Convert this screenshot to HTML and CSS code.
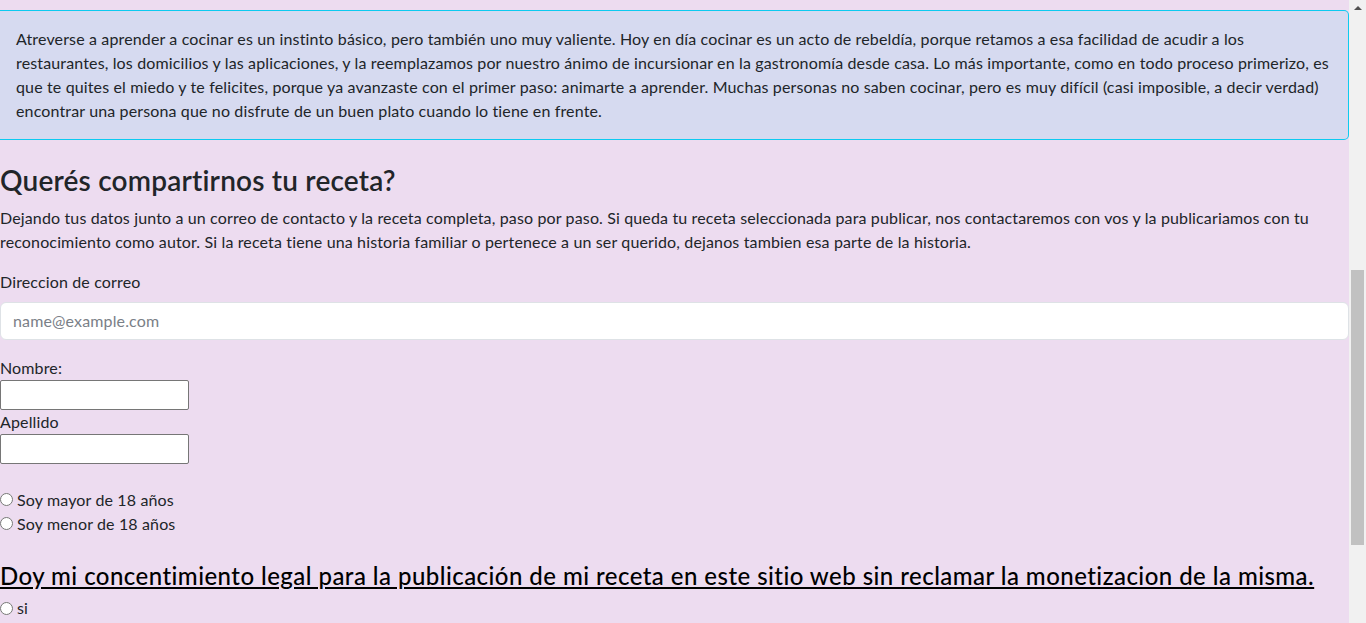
FILE: index.html
```html
<!DOCTYPE html>
<html lang="es">
<head>
<meta charset="utf-8">
<title>Recetas</title>
<link rel="stylesheet" href="styles.css">
</head>
<body>
<div class="page">
  <main class="content">
    <div class="intro-box">
      <p>Atreverse a aprender a cocinar es un instinto básico, pero también uno muy valiente. Hoy en día cocinar es un acto de rebeldía, porque retamos a esa facilidad de acudir a los restaurantes, los domicilios y las aplicaciones, y la reemplazamos por nuestro ánimo de incursionar en la gastronomía desde casa. Lo más importante, como en todo proceso primerizo, es que te quites el miedo y te felicites, porque ya avanzaste con el primer paso: animarte a aprender. Muchas personas no saben cocinar, pero es muy difícil (casi imposible, a decir verdad) encontrar una persona que no disfrute de un buen plato cuando lo tiene en frente.</p>
    </div>
    <section class="share">
      <h3 class="share-title">Querés compartirnos tu receta?</h3>
      <p class="share-text">Dejando tus datos junto a un correo de contacto y la receta completa, paso por paso. Si queda tu receta seleccionada para publicar, nos contactaremos con vos y la publicariamos con tu reconocimiento como autor. Si la receta tiene una historia familiar o pertenece a un ser querido, dejanos tambien esa parte de la historia.</p>
      <form class="share-form">
        <div class="field">
          <label class="field-label" for="email">Direccion de correo</label>
          <input class="form-control" type="email" id="email" placeholder="name@example.com">
        </div>
        <div class="names">
          <label class="plain-label" for="nombre">Nombre:</label>
          <input class="plain-input" type="text" id="nombre">
          <label class="plain-label" for="apellido">Apellido</label>
          <input class="plain-input" type="text" id="apellido">
        </div>
        <div class="radios">
          <label class="radio"><input type="radio" name="edad"> Soy mayor de 18 años</label>
          <label class="radio"><input type="radio" name="edad"> Soy menor de 18 años</label>
        </div>
        <h4 class="consent-title">Doy mi concentimiento legal para la publicación de mi receta en este sitio web sin reclamar la monetizacion de la misma.</h4>
        <label class="radio"><input type="radio" name="consent"> si</label>
      </form>
    </section>
  </main>
  <div class="scrollbar">
    <div class="scroll-up"></div>
    <div class="scroll-thumb"></div>
  </div>
</div>
</body>
</html>
```

FILE: styles.css
```css
* { box-sizing: border-box; }
html, body {
  margin: 0;
  height: 623px;
  overflow: hidden;
}
body {
  background: #eddcf0;
  color: #212529;
  font-family: Lato, "Noto Sans", sans-serif;
  font-size: 16px;
  line-height: 24px;
  letter-spacing: 0.14px;
}
.page {
  display: flex;
  height: 623px;
}
.content {
  flex: 1;
  min-width: 0;
  padding-top: 10px;
}
.intro-box {
  background: #d6daf0;
  border: 1px solid #0dcaf0;
  border-left: 0;
  border-radius: 0 5px 5px 0;
  padding: 16px;
}
.intro-box p { margin: 0; }
.share { padding-top: 24px; }
.share-title {
  margin: 0 0 8px;
  font-size: 28px;
  font-weight: 600;
  line-height: 1.2;
  letter-spacing: 0.2px;
}
.share-text { margin: 0 0 16px; }
.field { margin-bottom: 16px; }
.field-label {
  display: block;
  margin-bottom: 8px;
}
.form-control {
  display: block;
  width: 100%;
  height: 38px;
  padding: 6px 12px;
  font: inherit;
  letter-spacing: inherit;
  color: #212529;
  background: #fff;
  border: 1px solid #dee2e6;
  border-radius: 6px;
}
.form-control::placeholder { color: #7a8087; }
.names {
  display: flex;
  flex-direction: column;
  align-items: flex-start;
}
.plain-input {
  width: 189px;
  height: 30px;
  font: inherit;
  border: 1px solid #767676;
  border-radius: 2px;
  background: #fff;
  margin: 0;
}
.radios {
  display: flex;
  flex-direction: column;
  padding-top: 24px;
}
.radio {
  display: flex;
  align-items: center;
}
.radio input {
  margin: 0 4px 0 0;
  width: 13px;
  height: 13px;
}
.consent-title {
  margin: 26px 0 6px;
  font-size: 24px;
  font-weight: 500;
  line-height: 1.2;
  letter-spacing: 0.45px;
  color: #000;
  text-decoration: underline;
}
.scrollbar {
  width: 17px;
  background: #f1f1f1;
  display: flex;
  flex-direction: column;
  align-items: center;
}
.scroll-up {
  margin-top: 6px;
  width: 0;
  height: 0;
  border-left: 4px solid transparent;
  border-right: 4px solid transparent;
  border-bottom: 4px solid #505050;
}
.scroll-thumb {
  margin-top: 260px;
  width: 13px;
  height: 275px;
  background: #c1c1c1;
}
```
